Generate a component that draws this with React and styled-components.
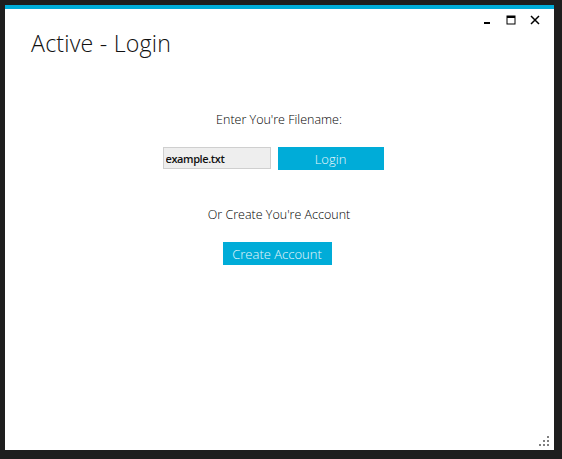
import React from 'react';
import styled, { createGlobalStyle } from 'styled-components';

const GlobalStyle = createGlobalStyle`
  html, body {
    margin: 0;
    padding: 0;
    background: #1e1e1e;
  }
  body {
    font-family: "Open Sans", "Noto Sans", sans-serif;
  }
`;

const Frame = styled.div`
  width: 562px;
  height: 459px;
  padding: 5px 0 0 5px;
  box-sizing: border-box;
`;

const Window = styled.div`
  position: relative;
  width: 549px;
  height: 445px;
  background: #fff;
  border-top: 4px solid #00acd8;
  box-sizing: border-box;
  display: flex;
  flex-direction: column;
`;

const TitleRow = styled.div`
  display: flex;
  justify-content: space-between;
  align-items: flex-start;
`;

const Title = styled.h1`
  margin: 18px 0 0 26px;
  font-size: 23.2px;
  font-weight: 300;
  color: #111;
  letter-spacing: 0.2px;
`;

const Controls = styled.div`
  display: flex;
  gap: 6px;
  margin: 2px 10px 0 0;
`;

const ControlButton = styled.div`
  width: 18px;
  height: 18px;
  display: flex;
  align-items: center;
  justify-content: center;
`;

const Content = styled.div`
  display: flex;
  flex-direction: column;
  align-items: center;
  margin-top: 52px;
  padding-right: 1px;
`;

const Label = styled.div`
  font-size: 12.5px;
  font-weight: 300;
  color: #000;
  margin-top: ${p => p.top || 0}px;
  margin-bottom: 19px;
`;

const LoginRow = styled.div`
  display: flex;
  gap: 7px;
  margin-right: 12px;
`;

const FileInput = styled.input`
  width: 108px;
  height: 22px;
  box-sizing: border-box;
  border: 1px solid #cfcfcf;
  background: #eeeeee;
  font-family: "Open Sans", sans-serif;
  font-size: 11px;
  font-weight: 600;
  letter-spacing: -0.4px;
  color: #111;
  padding: 0 2px;
  outline: none;
`;

const Button = styled.button`
  width: ${p => p.w}px;
  height: 23px;
  margin-right: ${p => p.shift || 0}px;
  border: none;
  background: #00acd8;
  color: #e8f7fc;
  font-family: "Open Sans", sans-serif;
  font-size: 13px;
  font-weight: 300;
  padding: 0;
  cursor: pointer;
`;

const Grip = styled.svg`
  position: absolute;
  right: 5px;
  bottom: 4px;
`;

const App = () => (
  <>
    <GlobalStyle />
    <Frame>
      <Window>
        <TitleRow>
          <Title>Active - Login</Title>
          <Controls>
            <ControlButton>
              <svg width="10" height="10" viewBox="0 0 10 10">
                <rect x="2" y="7" width="6" height="2" fill="#000" />
              </svg>
            </ControlButton>
            <ControlButton>
              <svg width="10" height="10" viewBox="0 0 10 10">
                <rect x="1" y="1" width="8" height="8" fill="none" stroke="#000" strokeWidth="1" />
                <rect x="1" y="1" width="8" height="2" fill="#000" />
              </svg>
            </ControlButton>
            <ControlButton>
              <svg width="10" height="10" viewBox="0 0 10 10">
                <path d="M1 1 L9 9 M9 1 L1 9" stroke="#000" strokeWidth="1.5" />
              </svg>
            </ControlButton>
          </Controls>
        </TitleRow>
        <Content>
          <Label>Enter You're Filename:</Label>
          <LoginRow>
            <FileInput defaultValue="example.txt" />
            <Button w={106}>Login</Button>
          </LoginRow>
          <Label top={36}>Or Create You're Account</Label>
          <Button w={109} shift={4}>Create Account</Button>
        </Content>
        <Grip width="10" height="10" viewBox="0 0 10 10">
          <g fill="#808080">
            <rect x="8" y="0" width="2" height="2" />
            <rect x="4" y="4" width="2" height="2" />
            <rect x="8" y="4" width="2" height="2" />
            <rect x="0" y="8" width="2" height="2" />
            <rect x="4" y="8" width="2" height="2" />
            <rect x="8" y="8" width="2" height="2" />
          </g>
        </Grip>
      </Window>
    </Frame>
  </>
);

export default App;
